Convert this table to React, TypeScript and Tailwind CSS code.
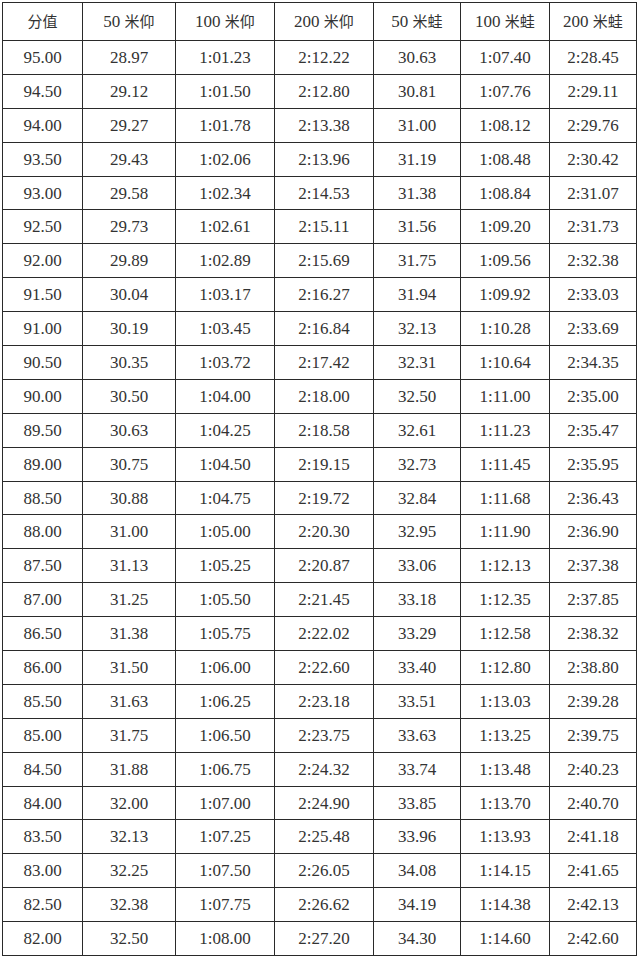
const headers: [string, string][] = [
  ["", "分值"],
  ["50 ", "米仰"],
  ["100 ", "米仰"],
  ["200 ", "米仰"],
  ["50 ", "米蛙"],
  ["100 ", "米蛙"],
  ["200 ", "米蛙"],
];

const widths = ["w-[80px]", "w-[93px]", "w-[99px]", "w-[99px]", "w-[87px]", "w-[89px]", "w-[87px]"];

const rows: string[][] = [
  ["95.00", "28.97", "1:01.23", "2:12.22", "30.63", "1:07.40", "2:28.45"],
  ["94.50", "29.12", "1:01.50", "2:12.80", "30.81", "1:07.76", "2:29.11"],
  ["94.00", "29.27", "1:01.78", "2:13.38", "31.00", "1:08.12", "2:29.76"],
  ["93.50", "29.43", "1:02.06", "2:13.96", "31.19", "1:08.48", "2:30.42"],
  ["93.00", "29.58", "1:02.34", "2:14.53", "31.38", "1:08.84", "2:31.07"],
  ["92.50", "29.73", "1:02.61", "2:15.11", "31.56", "1:09.20", "2:31.73"],
  ["92.00", "29.89", "1:02.89", "2:15.69", "31.75", "1:09.56", "2:32.38"],
  ["91.50", "30.04", "1:03.17", "2:16.27", "31.94", "1:09.92", "2:33.03"],
  ["91.00", "30.19", "1:03.45", "2:16.84", "32.13", "1:10.28", "2:33.69"],
  ["90.50", "30.35", "1:03.72", "2:17.42", "32.31", "1:10.64", "2:34.35"],
  ["90.00", "30.50", "1:04.00", "2:18.00", "32.50", "1:11.00", "2:35.00"],
  ["89.50", "30.63", "1:04.25", "2:18.58", "32.61", "1:11.23", "2:35.47"],
  ["89.00", "30.75", "1:04.50", "2:19.15", "32.73", "1:11.45", "2:35.95"],
  ["88.50", "30.88", "1:04.75", "2:19.72", "32.84", "1:11.68", "2:36.43"],
  ["88.00", "31.00", "1:05.00", "2:20.30", "32.95", "1:11.90", "2:36.90"],
  ["87.50", "31.13", "1:05.25", "2:20.87", "33.06", "1:12.13", "2:37.38"],
  ["87.00", "31.25", "1:05.50", "2:21.45", "33.18", "1:12.35", "2:37.85"],
  ["86.50", "31.38", "1:05.75", "2:22.02", "33.29", "1:12.58", "2:38.32"],
  ["86.00", "31.50", "1:06.00", "2:22.60", "33.40", "1:12.80", "2:38.80"],
  ["85.50", "31.63", "1:06.25", "2:23.18", "33.51", "1:13.03", "2:39.28"],
  ["85.00", "31.75", "1:06.50", "2:23.75", "33.63", "1:13.25", "2:39.75"],
  ["84.50", "31.88", "1:06.75", "2:24.32", "33.74", "1:13.48", "2:40.23"],
  ["84.00", "32.00", "1:07.00", "2:24.90", "33.85", "1:13.70", "2:40.70"],
  ["83.50", "32.13", "1:07.25", "2:25.48", "33.96", "1:13.93", "2:41.18"],
  ["83.00", "32.25", "1:07.50", "2:26.05", "34.08", "1:14.15", "2:41.65"],
  ["82.50", "32.38", "1:07.75", "2:26.62", "34.19", "1:14.38", "2:42.13"],
  ["82.00", "32.50", "1:08.00", "2:27.20", "34.30", "1:14.60", "2:42.60"],
];

export default function App() {
  return (
    <div className="w-[640px] h-[960px] bg-white pt-[2px] pl-[2px]">
      <table className="border-collapse table-fixed w-[635px] text-[#333] text-[17px] font-['Liberation_Serif','Noto_Sans_CJK_SC',serif]">
        <thead>
          <tr className="h-[38px]">
            {headers.map(([num, zh], i) => (
              <th key={i} className={`${widths[i]} border border-[#2a2a2a] p-0 text-center font-normal align-middle`}>
                {num}
                <span className="text-[15px] font-['Noto_Sans_CJK_SC',sans-serif]">{zh}</span>
              </th>
            ))}
          </tr>
        </thead>
        <tbody>
          {rows.map((row, r) => (
            <tr key={r} className="h-[33.9px]">
              {row.map((cell, c) => (
                <td key={c} className="border border-[#2a2a2a] p-0 text-center align-middle leading-none">
                  {cell}
                </td>
              ))}
            </tr>
          ))}
        </tbody>
      </table>
    </div>
  );
}
